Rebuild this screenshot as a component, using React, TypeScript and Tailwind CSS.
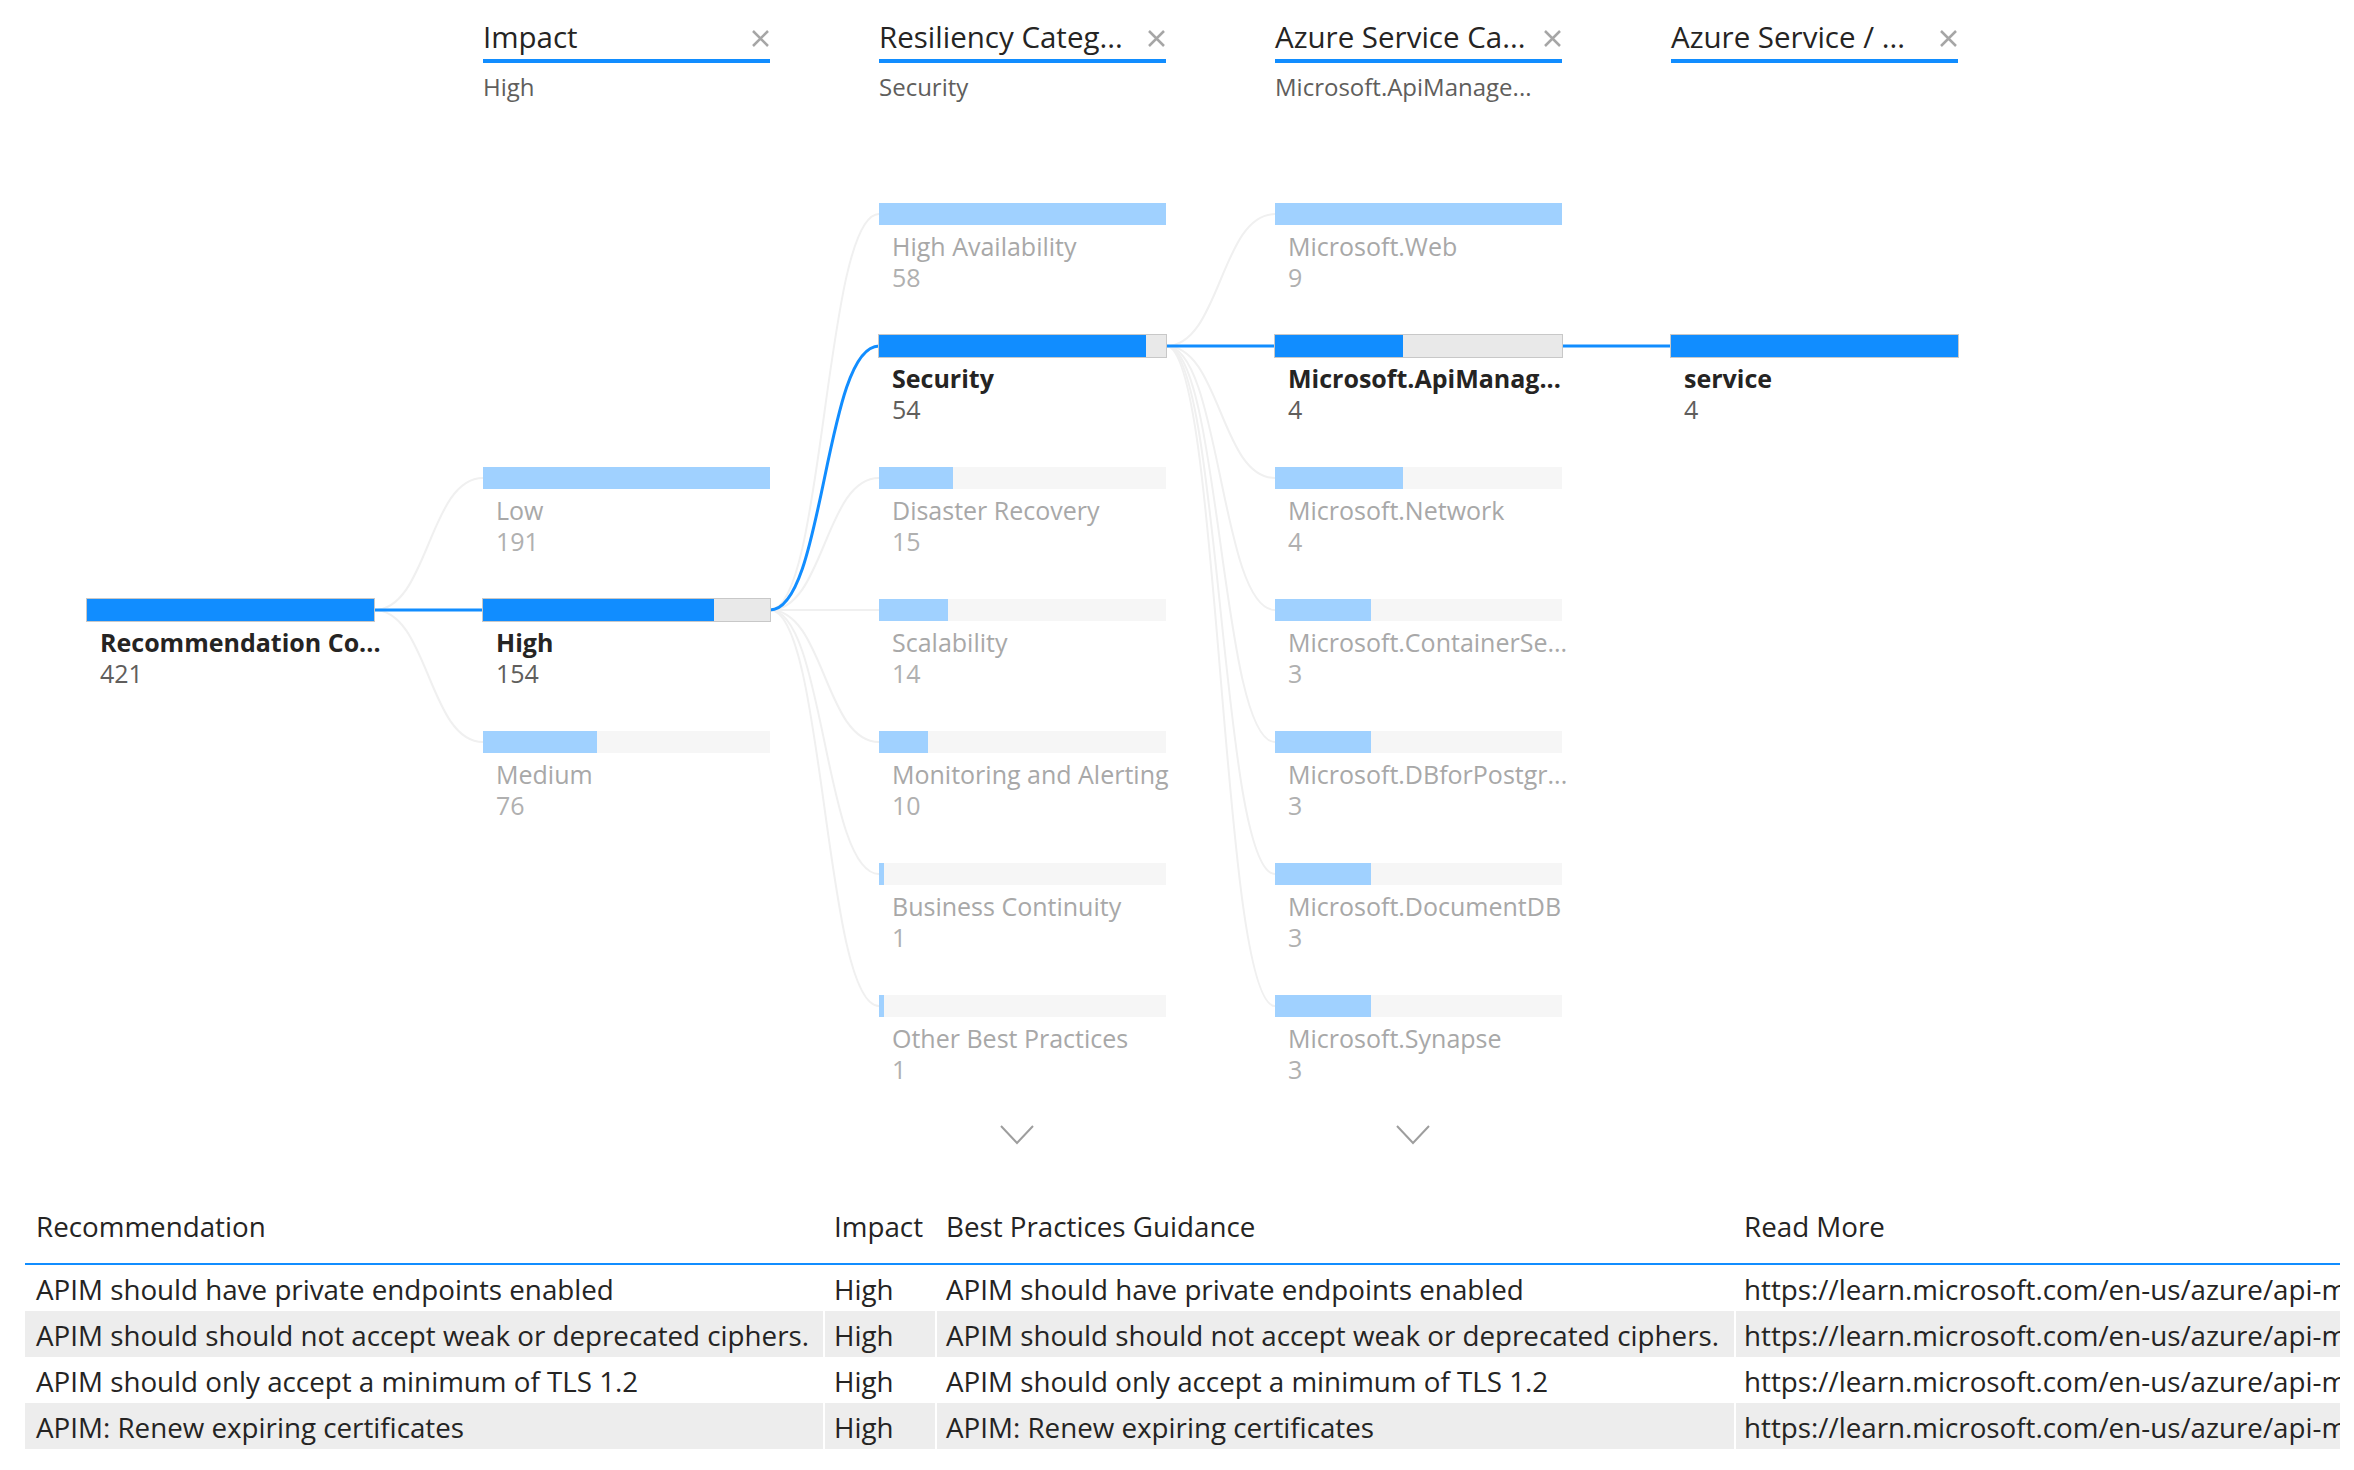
import React from 'react';

type TreeNode = { label: string; count: number; selected?: boolean };
type TreeColumn = {
  header?: { title: string; sub: string };
  offset: string;
  first: number;
  max: number;
  more?: boolean;
  nodes: TreeNode[];
};

const BLUE = '#118dff';
const COL_W = 287;
const COL_STEP = 396;
const LEFT = 87;
const NODE_H = 132;

const columns: TreeColumn[] = [
  {
    offset: 'mt-[497px]',
    first: 599,
    max: 421,
    nodes: [{ label: 'Recommendation Co...', count: 421, selected: true }],
  },
  {
    header: { title: 'Impact', sub: 'High' },
    offset: 'mt-[365px]',
    first: 467,
    max: 191,
    nodes: [
      { label: 'Low', count: 191 },
      { label: 'High', count: 154, selected: true },
      { label: 'Medium', count: 76 },
    ],
  },
  {
    header: { title: 'Resiliency Categ...', sub: 'Security' },
    offset: 'mt-[101px]',
    first: 203,
    max: 58,
    more: true,
    nodes: [
      { label: 'High Availability', count: 58 },
      { label: 'Security', count: 54, selected: true },
      { label: 'Disaster Recovery', count: 15 },
      { label: 'Scalability', count: 14 },
      { label: 'Monitoring and Alerting', count: 10 },
      { label: 'Business Continuity', count: 1 },
      { label: 'Other Best Practices', count: 1 },
    ],
  },
  {
    header: { title: 'Azure Service Ca...', sub: 'Microsoft.ApiManage...' },
    offset: 'mt-[101px]',
    first: 203,
    max: 9,
    more: true,
    nodes: [
      { label: 'Microsoft.Web', count: 9 },
      { label: 'Microsoft.ApiManag...', count: 4, selected: true },
      { label: 'Microsoft.Network', count: 4 },
      { label: 'Microsoft.ContainerSe...', count: 3 },
      { label: 'Microsoft.DBforPostgr...', count: 3 },
      { label: 'Microsoft.DocumentDB', count: 3 },
      { label: 'Microsoft.Synapse', count: 3 },
    ],
  },
  {
    header: { title: 'Azure Service / ...', sub: '' },
    offset: 'mt-[233px]',
    first: 335,
    max: 4,
    nodes: [{ label: 'service', count: 4, selected: true }],
  },
];

const rows = [
  'APIM should have private endpoints enabled',
  'APIM should should not accept weak or deprecated ciphers.',
  'APIM should only accept a minimum of TLS 1.2',
  'APIM: Renew expiring certificates',
];

const URL = 'https://learn.microsoft.com/en-us/azure/api-management/api-management-howto-manage-protocols-ciphers';

// connector curves between a selected node and every node of the next column
const links = () => {
  const faint: string[] = [];
  const blue: string[] = [];
  columns.forEach((col, i) => {
    const next = columns[i + 1];
    if (!next) return;
    const selIdx = col.nodes.findIndex((n) => n.selected);
    const x1 = LEFT + COL_STEP * i + COL_W;
    const y1 = col.first + selIdx * NODE_H + 11;
    const x2 = LEFT + COL_STEP * (i + 1);
    const mx = (x1 + x2) / 2;
    next.nodes.forEach((n, k) => {
      const y2 = next.first + k * NODE_H + 11;
      const d = `M ${x1} ${y1} C ${mx} ${y1}, ${mx} ${y2}, ${x2} ${y2}`;
      (n.selected ? blue : faint).push(d);
    });
  });
  return { faint, blue };
};

const CloseIcon = () => (
  <svg width="19" height="19" viewBox="0 0 19 19" className="mt-[3px] shrink-0">
    <path d="M2 2 L17 17 M17 2 L2 17" stroke="#a6a6a6" strokeWidth="2.5" fill="none" />
  </svg>
);

const Chevron = () => (
  <svg width="34" height="20" viewBox="0 0 34 20">
    <polyline points="1,1 17,18 33,1" fill="none" stroke="#9e9e9e" strokeWidth="2" />
  </svg>
);

const Node = ({ node, max }: { node: TreeNode; max: number }) => {
  const pct = (node.count / max) * 100;
  return (
    <div className="h-[132px]">
      <div
        className={`h-[22px] ${
          node.selected ? 'bg-[#e9e9e9] outline outline-1 outline-[#c8c8c8]' : 'bg-[#f6f6f6]'
        }`}
      >
        <div
          className={node.selected ? 'h-full bg-[#118dff]' : 'h-full bg-[#a0d1ff]'}
          style={{ width: `${pct}%` }}
        />
      </div>
      <div className="mt-[6px] whitespace-nowrap pl-[13px] text-[25px] leading-[31px]">
        <div className={node.selected ? 'font-bold text-[#252423]' : 'text-[#a8a8a8]'}>{node.label}</div>
        <div className={node.selected ? 'text-[#605e5c]' : 'text-[#b0b0b0]'}>{node.count}</div>
      </div>
    </div>
  );
};

export default function App() {
  const { faint, blue } = links();

  return (
    <div className="h-[1470px] w-[2354px] overflow-hidden bg-white font-['Open_Sans',sans-serif]">
      {/* decomposition tree */}
      <div className="relative h-[1190px]">
        <svg className="pointer-events-none absolute inset-0" width="2354" height="1190">
          {faint.map((d, i) => (
            <path key={`f${i}`} d={d} fill="none" stroke="#f0f0f0" strokeWidth="2" />
          ))}
          {blue.map((d, i) => (
            <path key={`b${i}`} d={d} fill="none" stroke={BLUE} strokeWidth="3" />
          ))}
        </svg>

        <div className="relative flex gap-[109px] pl-[87px] pt-[19px]">
          {columns.map((col, i) => (
            <div key={i} className="flex w-[287px] flex-col">
              <div className="h-[83px]">
                {col.header && (
                  <>
                    <div className="flex h-[36px] items-center justify-between gap-1">
                      <span className="whitespace-nowrap text-[29.5px] leading-[36px] text-[#252423]">
                        {col.header.title}
                      </span>
                      <CloseIcon />
                    </div>
                    <div className="mt-[4px] h-[4px] bg-[#118dff]" />
                    <div className="mt-[8px] whitespace-nowrap text-[24px] leading-[31px] text-[#605e5c]">
                      {col.header.sub}
                    </div>
                  </>
                )}
              </div>
              <div className={col.offset}>
                {col.nodes.map((n) => (
                  <Node key={n.label} node={n} max={col.max} />
                ))}
              </div>
              {col.more && (
                <div className="-mt-[2px] flex justify-center pr-[12px]">
                  <Chevron />
                </div>
              )}
            </div>
          ))}
        </div>
      </div>

      {/* table */}
      <div className="ml-[25px] w-[2315px] overflow-hidden pt-[13px] text-[27.75px] text-[#252423]">
        <div className="grid grid-cols-[798px_112px_799px_606px] border-b-2 border-[#118dff] pb-[14px] leading-[46px]">
          <div className="pl-[11px]">Recommendation</div>
          <div className="pl-[11px]">Impact</div>
          <div className="pl-[11px]">Best Practices Guidance</div>
          <div className="pl-[10px]">Read More</div>
        </div>
        {rows.map((r, i) => (
          <div
            key={r}
            className={`grid h-[46px] grid-cols-[798px_112px_799px_606px] whitespace-nowrap pt-[3px] leading-[43px] ${
              i % 2 === 1 ? 'bg-[#ededed]' : 'bg-white'
            }`}
          >
            <div className="pl-[11px]">{r}</div>
            <div className="-mt-[3px] border-l-2 border-white pl-[9px] pt-[3px]">High</div>
            <div className="-mt-[3px] border-l-2 border-white pl-[9px] pt-[3px]">{r}</div>
            <div className="-mt-[3px] overflow-hidden border-l-2 border-white pl-[8px] pt-[3px]">{URL}</div>
          </div>
        ))}
      </div>
    </div>
  );
}
